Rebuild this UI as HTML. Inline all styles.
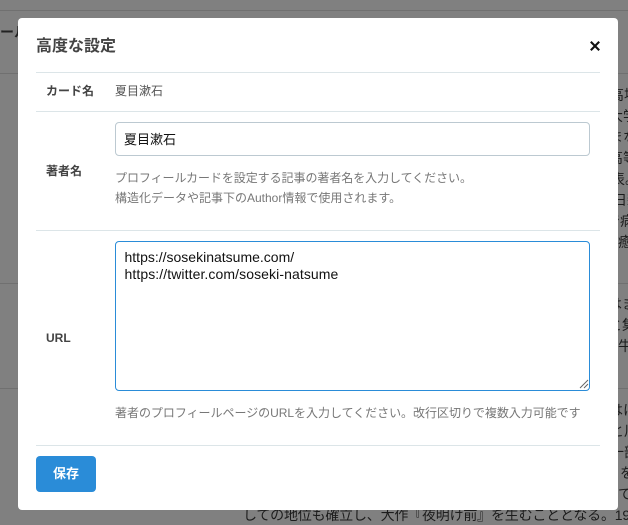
<!DOCTYPE html>
<html lang="ja"><head><meta charset="utf-8"><style>
html,body{margin:0;padding:0}
body{width:628px;height:524px;overflow:hidden;position:relative;background:#808080;font-family:"Liberation Sans","Noto Sans CJK JP",sans-serif;color:#444}
.a{position:absolute;white-space:nowrap}
.bg{font-size:14px;line-height:20px;color:#1c1c1c;left:618px}
.bl{position:absolute;left:0;width:628px;height:1px;background:#707070}
.hr{position:absolute;left:18px;width:564px;height:1px;background:#dce5e8}
.m{position:absolute;left:18px;top:18px;width:600px;height:492px;background:#fff;border-radius:4px}
.lb{font-size:12px;font-weight:700;line-height:18px;color:#444}
.h{font-size:12px;line-height:20px;color:#777}
</style></head><body>
<div class="bl" style="top:10px"></div><div class="bl" style="top:73px"></div><div class="bl" style="top:283px"></div><div class="bl" style="top:388px"></div>
<div class="a" style="left:0;top:22px;font-size:14px;line-height:20px;font-weight:700;color:#222">ール</div>
<div class="a bg" style="top:85px;left:610px">高場</div>
<div class="a bg" style="top:106px;left:609px">大学</div>
<div class="a bg" style="top:127px;left:609px">まな</div>
<div class="a bg" style="top:148px;left:609px">高等</div>
<div class="a bg" style="top:169px;left:611px">表。</div>
<div class="a bg" style="top:190px;left:613px">日新</div>
<div class="a bg" style="top:211px;left:606px">で病</div>
<div class="a bg" style="top:232px;left:604px">の癒</div>
<div class="a bg" style="top:294px;left:608px">はま</div>
<div class="a bg" style="top:315px;left:608px">と集</div>
<div class="a bg" style="top:336px;left:618px">牛一</div>
<div class="a bg" style="top:400px;left:609px">はに</div>
<div class="a bg" style="top:421px;left:610px">と川</div>
<div class="a bg" style="top:442px;left:610px">一部</div>
<div class="a bg" style="top:463px;left:606px">とを</div>
<div class="a bg" style="top:484px;left:618px">て、</div>
<div class="a bg" style="top:505px;left:243px;letter-spacing:-.2px">しての地位も確立し、大作『夜明け前』を生むこととなる。1927</div>
<div class="m">
<div class="a" style="left:18px;top:17px;font-size:16px;line-height:24px;font-weight:700;color:#444">高度な設定</div>
<svg class="a" style="left:571px;top:22px" width="12" height="12" viewBox="0 0 12 12"><path d="M1.8 1.8L10.2 10.2M10.2 1.8L1.8 10.2" stroke="#111" stroke-width="2.1" fill="none"/></svg>
<div class="hr" style="top:54px"></div>
<div class="a lb" style="left:28px;top:64px">カード名</div>
<div class="a" style="left:97px;top:64px;font-size:12px;line-height:18px;color:#555">夏目漱石</div>
<div class="hr" style="top:93px"></div>
<div class="a" style="left:97px;top:104px;width:473px;height:32px;border:1px solid #bcc9d1;border-radius:4px"></div>
<div class="a" style="left:106px;top:113px;font-size:13px;line-height:18px;color:#111">夏目漱石</div>
<div class="a lb" style="left:28px;top:144px">著者名</div>
<div class="a h" style="left:97px;top:150px;letter-spacing:-.06px">プロフィールカードを設定する記事の著者名を入力してください。</div>
<div class="a h" style="left:97px;top:170px">構造化データや記事下のAuthor情報で使用されます。</div>
<div class="hr" style="top:212px"></div>
<div class="a" style="left:97px;top:223px;width:473px;height:148px;border:1px solid #2a8cd8;border-radius:4px"></div>
<div class="a" style="left:106.5px;top:231px;font-size:14px;line-height:17px;color:#111">https://sosekinatsume.com/<br><span style="letter-spacing:.09px">https://twitter.com/soseki-natsume</span></div>
<svg class="a" style="left:561px;top:361px" width="10" height="10" viewBox="0 0 10 10"><path d="M1 9L9 1M5 9L9 5" stroke="#666" stroke-width="1" fill="none"/></svg>
<div class="a lb" style="left:28px;top:311px">URL</div>
<div class="a h" style="left:97px;top:385px;letter-spacing:-.03px">著者のプロフィールページのURLを入力してください。改行区切りで複数入力可能です</div>
<div class="hr" style="top:427px"></div>
<div class="a" style="left:18px;top:438px;width:60px;height:36px;background:#2a8cd8;border-radius:4px;color:#fff;font-size:13px;font-weight:700;line-height:36px;text-align:center">保存</div>
</div>
</body></html>
